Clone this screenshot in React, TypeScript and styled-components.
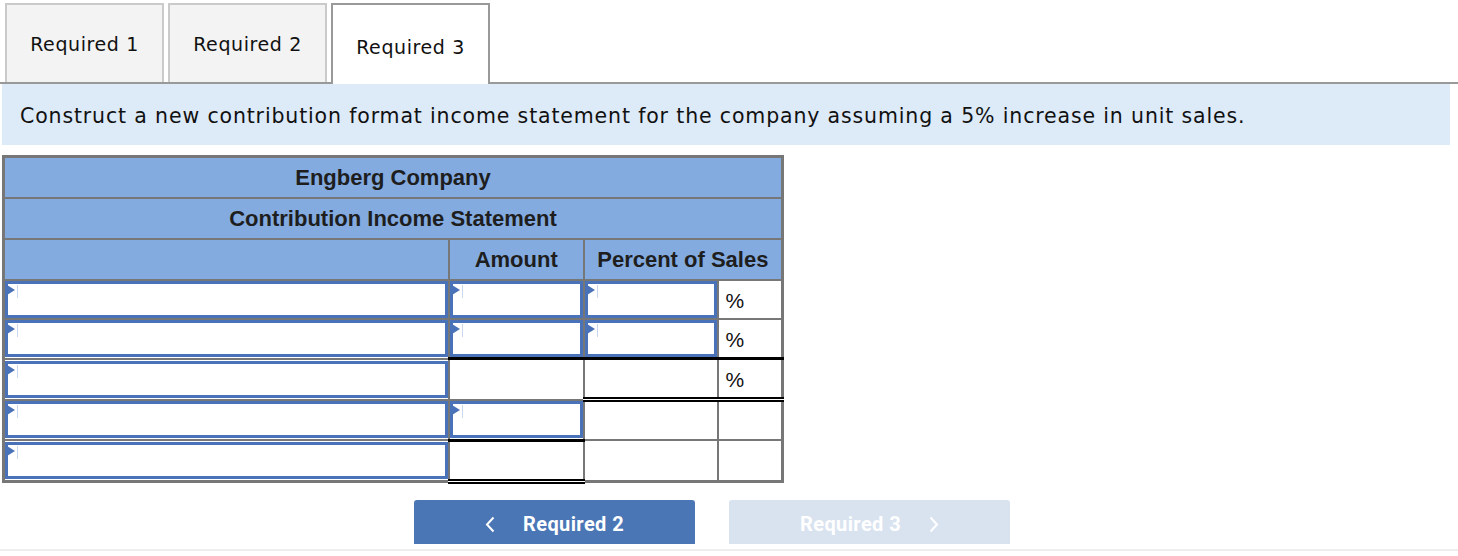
import React from 'react';
import styled, { createGlobalStyle, css } from 'styled-components';

const GlobalStyle = createGlobalStyle`
  html, body {
    margin: 0;
    padding: 0;
    background: #ffffff;
  }
  body {
    font-family: "DejaVu Sans", Verdana, sans-serif;
    color: #222;
  }
`;

const Page = styled.div`
  width: 1458px;
  height: 556px;
  overflow: hidden;
`;

const TabBar = styled.div`
  display: flex;
  gap: 4px;
  padding: 3px 8px 0 5px;
  height: 79px;
  border-bottom: 2px solid #999;
`;

const Tab = styled.div<{ $active?: boolean }>`
  box-sizing: border-box;
  width: 159px;
  height: 79px;
  display: flex;
  align-items: center;
  justify-content: center;
  font-size: 19px;
  letter-spacing: 0.6px;
  color: #111;
  border: 2px solid #cacaca;
  border-bottom: none;
  background: #f3f3f3;
  ${(p) =>
    p.$active &&
    css`
      height: 81px;
      margin-bottom: -2px;
      border-color: #999;
      background: #ffffff;
      padding-top: 4px;
    `}
`;

const Prompt = styled.div`
  margin: 0 8px 0 2px;
  height: 61px;
  background: #ddeaf8;
  display: flex;
  align-items: center;
  padding: 3px 0 0 18px;
  box-sizing: border-box;
  font-size: 20.5px;
  letter-spacing: 0.85px;
  color: #111;
`;

const Table = styled.table`
  margin: 10px 0 0 2px;
  border-collapse: collapse;
  width: 782px;
  border: 3px solid #777;
  font-family: "Liberation Sans", Arial, sans-serif;
`;

const HeadCell = styled.th`
  background: #83abe0;
  border: 2px solid #777;
  height: 39px;
  padding: 0;
  font-size: 22px;
  font-weight: bold;
  color: #1e1e1e;
  text-align: center;
`;

type Line = 'none' | 'single' | 'double';

const Cell = styled.td<{ $top?: Line; $bottom?: Line }>`
  border: 2px solid #777;
  height: 37px;
  padding: 0;
  background: #fff;
  font-size: 21px;
  color: #111;
  ${(p) => p.$top === 'single' && css`border-top: 3px solid #000;`}
  ${(p) => p.$bottom === 'single' && css`border-bottom: 3px solid #000;`}
  ${(p) => p.$bottom === 'double' && css`border-bottom: 5px double #000;`}
`;

const InputBox = styled.div`
  position: relative;
  box-sizing: border-box;
  height: 37px;
  border: 3px solid #4a72b8;
  background: #fff;
  &::before {
    content: '';
    position: absolute;
    left: -1px;
    top: 1px;
    border-left: 8px solid #4a72b8;
    border-top: 5px solid transparent;
    border-bottom: 5px solid transparent;
  }
  &::after {
    content: '';
    position: absolute;
    left: 9px;
    top: 1px;
    width: 1px;
    height: 13px;
    background: #c9d8ee;
  }
`;

const Percent = styled.span`
  display: block;
  padding: 3px 0 0 7px;
`;

const ButtonRow = styled.div`
  display: flex;
  gap: 34px;
  margin: 16px 0 0 414px;
`;

const NavButton = styled.div<{ $disabled?: boolean }>`
  width: 281px;
  height: 44px;
  border-radius: 3px 3px 0 0;
  background: ${(p) => (p.$disabled ? '#d9e3ef' : '#4a76b6')};
  color: #fff;
  display: flex;
  align-items: center;
  justify-content: center;
  gap: 28px;
  font-family: Roboto, "Liberation Sans", sans-serif;
  font-weight: bold;
  font-size: 20px;
  letter-spacing: 0.4px;
  padding-top: 5px;
  box-sizing: border-box;
`;

const Footer = styled.div`
  margin-top: 5px;
  border-top: 2px solid #eeeeee;
`;

const Chevron = ({ dir }: { dir: 'left' | 'right' }) => (
  <svg width="10" height="17" viewBox="0 0 10 17">
    <path
      d={dir === 'left' ? 'M8.5 1.5 L2 8.5 L8.5 15.5' : 'M1.5 1.5 L8 8.5 L1.5 15.5'}
      fill="none"
      stroke="#fff"
      strokeWidth="2"
    />
  </svg>
);

const Input = () => <InputBox />;

export default function App() {
  return (
    <Page>
      <GlobalStyle />
      <TabBar>
        <Tab>Required 1</Tab>
        <Tab>Required 2</Tab>
        <Tab $active>Required 3</Tab>
      </TabBar>
      <Prompt>
        Construct a new contribution format income statement for the company assuming a 5% increase in unit sales.
      </Prompt>
      <Table>
        <colgroup>
          <col style={{ width: 446 }} />
          <col style={{ width: 135 }} />
          <col style={{ width: 134 }} />
          <col style={{ width: 65 }} />
        </colgroup>
        <thead>
          <tr>
            <HeadCell colSpan={4}>Engberg Company</HeadCell>
          </tr>
          <tr>
            <HeadCell colSpan={4}>Contribution Income Statement</HeadCell>
          </tr>
          <tr>
            <HeadCell />
            <HeadCell>Amount</HeadCell>
            <HeadCell colSpan={2}>Percent of Sales</HeadCell>
          </tr>
        </thead>
        <tbody>
          <tr>
            <Cell><Input /></Cell>
            <Cell><Input /></Cell>
            <Cell><Input /></Cell>
            <Cell><Percent>%</Percent></Cell>
          </tr>
          <tr>
            <Cell><Input /></Cell>
            <Cell><Input /></Cell>
            <Cell><Input /></Cell>
            <Cell><Percent>%</Percent></Cell>
          </tr>
          <tr>
            <Cell><Input /></Cell>
            <Cell $top="single" />
            <Cell $top="single" $bottom="double" />
            <Cell $top="single" $bottom="double"><Percent>%</Percent></Cell>
          </tr>
          <tr>
            <Cell><Input /></Cell>
            <Cell $bottom="single"><Input /></Cell>
            <Cell />
            <Cell />
          </tr>
          <tr>
            <Cell><Input /></Cell>
            <Cell $bottom="double" />
            <Cell />
            <Cell />
          </tr>
        </tbody>
      </Table>
      <ButtonRow>
        <NavButton>
          <Chevron dir="left" />
          <span>Required 2</span>
        </NavButton>
        <NavButton $disabled>
          <span>Required 3</span>
          <Chevron dir="right" />
        </NavButton>
      </ButtonRow>
      <Footer />
    </Page>
  );
}
